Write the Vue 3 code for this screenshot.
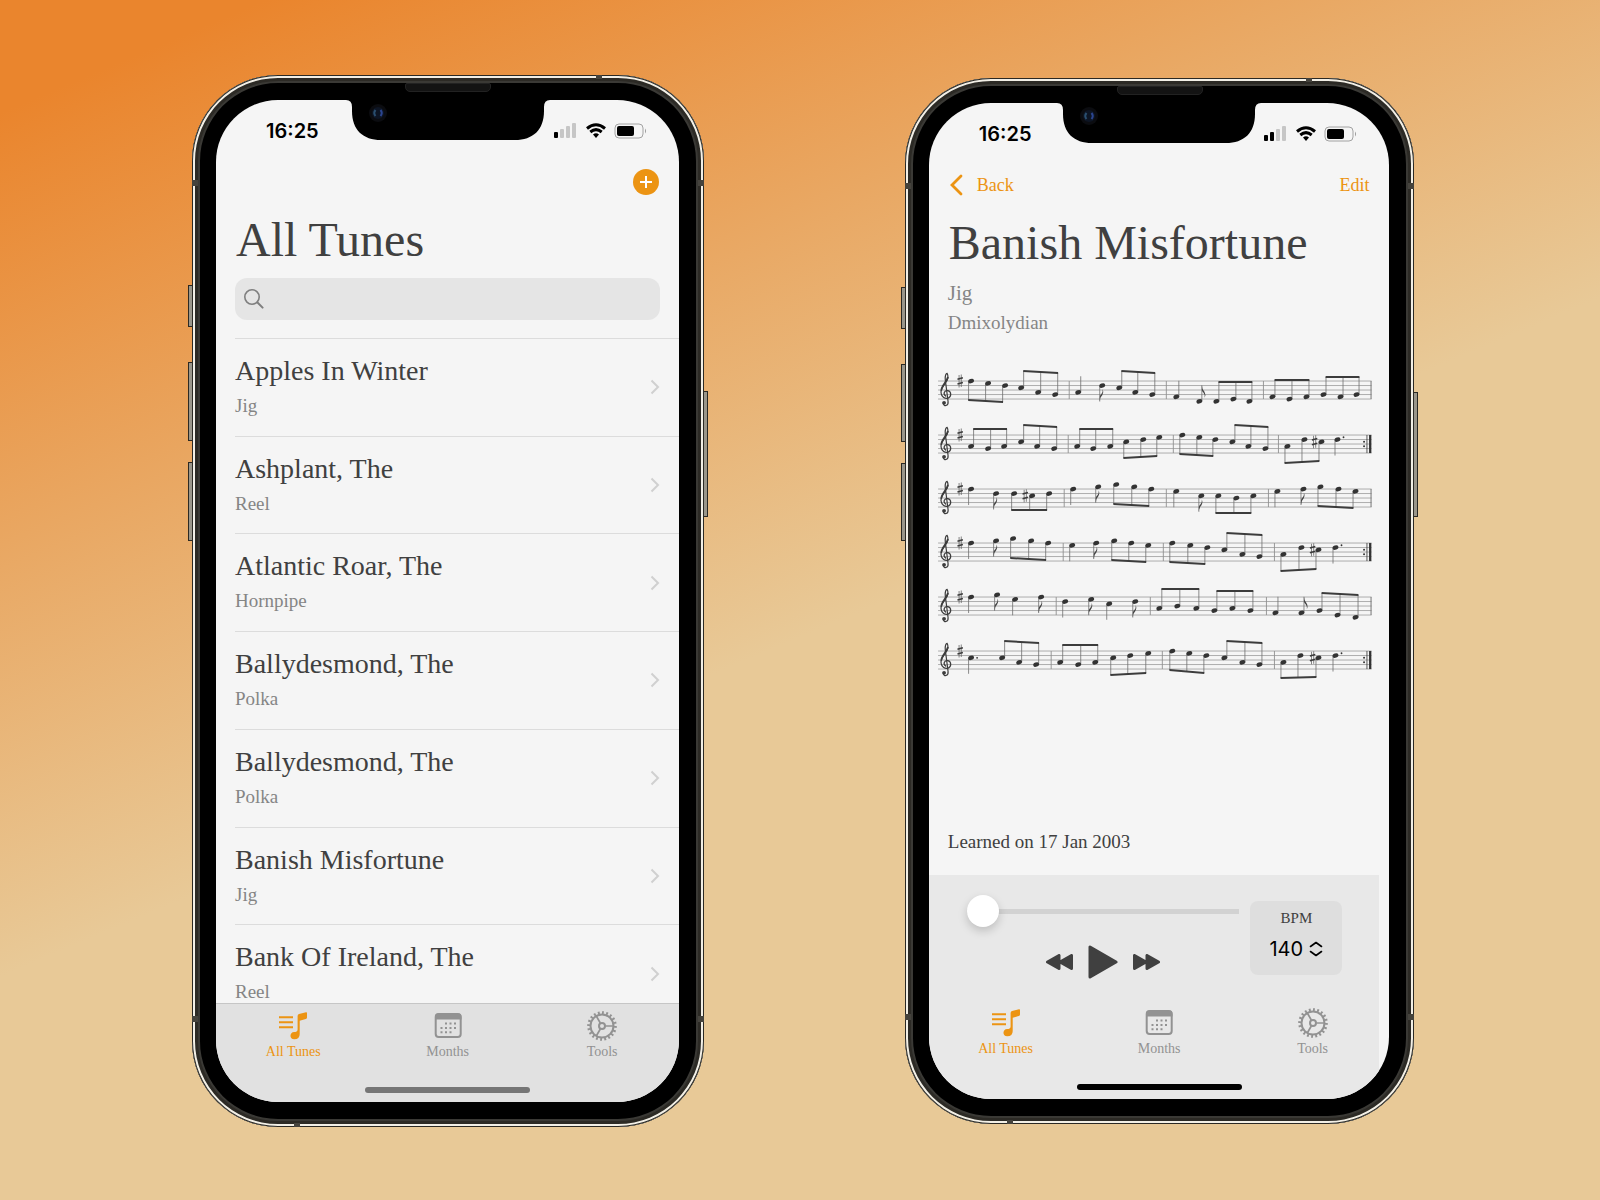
<script setup>
import { ref } from 'vue'

const tunes = [
  { name: 'Apples In Winter', type: 'Jig' },
  { name: 'Ashplant, The', type: 'Reel' },
  { name: 'Atlantic Roar, The', type: 'Hornpipe' },
  { name: 'Ballydesmond, The', type: 'Polka' },
  { name: 'Ballydesmond, The', type: 'Polka' },
  { name: 'Banish Misfortune', type: 'Jig' },
  { name: 'Bank Of Ireland, The', type: 'Reel' },
]

const tabs = ['All Tunes', 'Months', 'Tools']
const phones = [
  { id: 'list', bars: 1 },
  { id: 'tune', bars: 2 },
]

const position = ref(0)
const bpm = ref(140)
const query = ref('')

// Pitches count half staff spaces down from the top line.
// single: [x, pitch, direction, flagged, dotted]
// beam: [x positions, pitches, beam start y, beam end y, direction]
const staves = [
  {
    bars: [131, 228, 325], sharps: [],
    singles: [[140, 5, 1, 0], [164, 2, -1, 1], [238, 7, 1, 0], [261, 9, 1, 1]],
    beams: [
      [[33, 50, 67], [0, 1, 2], 19, 21, -1], [[83, 100, 117], [3, 5, 6], -10, -8, 1],
      [[181, 197, 214], [3, 5, 6], -10, -8, 1], [[278, 295, 311], [9, 8, 9], 1, 1, 1],
      [[334, 351, 368], [7, 8, 7], -1, -1, 1], [[385, 402, 418], [6, 7, 6], -4, -4, 1],
    ],
  },
  {
    bars: [130, 235, 340], sharps: [[376, 3]], repeat: true,
    singles: [[399, 2, -1, 0, 1]],
    beams: [
      [[33, 50, 66], [5, 6, 5], -6, -6, 1], [[83, 99, 116], [3, 5, 6], -10, -8, 1],
      [[139, 155, 172], [5, 6, 5], -6, -6, 1], [[188, 205, 221], [3, 2, 1], 23, 21, -1],
      [[244, 261, 277], [0, 1, 2], 19, 21, -1], [[294, 310, 327], [3, 5, 6], -10, -8, 1],
      [[349, 366, 383], [5, 2, 3], 28, 26, -1],
    ],
  },
  {
    bars: [126, 228, 330], sharps: [[87, 3]],
    singles: [[33, 0, -1, 0], [58, 2, -1, 1], [135, 0, -1, 0], [160, -1, -1, 1], [238, 1, -1, 0], [263, 3, -1, 1], [339, 1, -1, 0], [365, 0, -1, 1]],
    beams: [
      [[76, 94, 111], [2, 3, 2], 21, 21, -1], [[178, 196, 213], [-2, -1, 0], 15, 17, -1],
      [[280, 298, 315], [3, 4, 3], 24, 24, -1], [[382, 400, 417], [-1, 0, 1], 17, 19, -1],
    ],
  },
  {
    bars: [125, 225, 336], sharps: [[374, 3]], repeat: true,
    singles: [[33, 0, -1, 0], [58, -1, -1, 1], [134, 1, -1, 0], [158, 0, -1, 1], [397, 2, -1, 0, 1]],
    beams: [
      [[75, 93, 110], [-2, -1, 0], 15, 17, -1], [[176, 193, 210], [-1, 0, 1], 17, 19, -1],
      [[234, 252, 269], [0, 1, 2], 19, 21, -1], [[286, 304, 321], [3, 5, 6], -10, -8, 1],
      [[345, 363, 380], [5, 2, 3], 28, 26, -1],
    ],
  },
  {
    bars: [118, 212, 328], sharps: [],
    singles: [[33, 0, -1, 0], [59, -1, -1, 1], [77, 1, -1, 0], [103, 0, -1, 1], [127, 2, -1, 0], [153, 1, -1, 1], [171, 3, -1, 0], [197, 2, -1, 1], [337, 7, 1, 0], [363, 7, 1, 1]],
    beams: [
      [[221, 239, 258], [5, 4, 5], -8, -8, 1], [[276, 294, 312], [6, 5, 6], -6, -6, 1],
      [[381, 399, 417], [6, 8, 9], -4, -2, 1],
    ],
  },
  {
    bars: [113, 224, 336], sharps: [[374, 3]], repeat: true,
    singles: [[33, 3, -1, 0, 1], [397, 2, -1, 0, 1]],
    beams: [
      [[64, 81, 98], [3, 5, 6], -10, -8, 1], [[122, 140, 157], [5, 6, 5], -6, -6, 1],
      [[175, 192, 210], [3, 2, 1], 24, 22, -1], [[234, 251, 268], [0, 1, 2], 19, 22, -1],
      [[286, 304, 321], [3, 5, 6], -10, -8, 1], [[345, 362, 380], [5, 2, 3], 27, 26, -1],
    ],
  },
]

const STEP = 2.25
const noteY = (pitch) => pitch * STEP
const stemX = (x, dir) => x + dir * 2.5
const heads = (staff) => [
  ...staff.singles.map(([x, p]) => [x, p]),
  ...staff.beams.flatMap(([xs, ps]) => xs.map((x, i) => [x, ps[i]])),
]
const stems = (staff) => [
  ...staff.singles.map(([x, p, d]) => `M${stemX(x, d)} ${noteY(p)}v${-d * 16}`),
  ...staff.beams.flatMap(([xs, ps, a, b, d]) =>
    xs.map((x, i) => `M${stemX(x, d)} ${noteY(ps[i])}V${a + ((b - a) * i) / 2}`)),
].join('')
const beamPath = ([xs, , a, b, d]) => {
  const left = stemX(xs[0], d) - 0.4
  const right = stemX(xs[2], d) + 0.4
  return `M${left} ${a - 1}L${right} ${b - 1}V${b + 1}L${left} ${a + 1}Z`
}
const flags = (staff) => staff.singles.filter((n) => n[3]).map(([x, p, d]) =>
  `M${stemX(x, d)} ${noteY(p) - d * 16}q0 ${d * 4} 2.6 ${d * 6.5}q1.8 ${d * 3} 0.2 ${d * 6}q0.6 ${-d * 3} -1.2 ${-d * 5}q-1.6 ${-d * 1.6} -1.6 ${-d * 3}z`).join('')
</script>

<template>
  <main class="stage">
    <article v-for="phone in phones" :key="phone.id" class="phone" :class="phone.id">
      <span class="key mute"></span>
      <span class="key up"></span>
      <span class="key down"></span>
      <span class="key power"></span>
      <span class="band band-l1"></span>
      <span class="band band-l2"></span>
      <span class="band band-r1"></span>
      <span class="band band-r2"></span>
      <span class="band band-t"></span>
      <span class="band band-b"></span>
      <span class="speaker"></span>

      <section class="screen">
        <svg class="notch" viewBox="0 0 204 40" aria-hidden="true">
          <path d="M0 0H204Q198 0 198 7V11C198 30 187 40 169 40H35C17 40 6 30 6 11V7Q6 0 0 0Z" fill="#000" />
          <circle cx="32" cy="13" r="9" fill="#0b0c10" />
          <circle cx="32" cy="13" r="6" fill="#0d1524" />
          <path d="M29.500 10q-2.500 3 0 6" stroke="#2a4f70" stroke-width="2" fill="none" />
          <path d="M34.500 10q2.500 3 0 6" stroke="#2b4590" stroke-width="2" fill="none" />
        </svg>

        <header class="status">
          <time>16:25</time>
          <svg width="94" height="16" viewBox="0 0 94 16" aria-hidden="true">
            <rect v-for="n in 4" :key="n" :x="1 + (n - 1) * 6" :y="12 - n * 3" width="4" :height="3 + n * 3" rx="1" :fill="n <= phone.bars ? '#000' : '#c6c6c6'" />
            <g fill="none" stroke="#000" stroke-width="3">
              <path d="M34 5.500Q43 -2 52 5.500" />
              <path d="M37.300 9Q43 4.300 48.700 9" />
            </g>
            <path d="M40 11.500Q43 9 46 11.500L43 15Z" />
            <rect x="62" y="1" width="28" height="14" rx="4" fill="none" stroke="#a2a2a2" />
            <rect x="64" y="3" width="17" height="10" rx="2" />
            <path d="M92 5.500q2 2.500 0 5z" fill="#999" />
          </svg>
        </header>

        <template v-if="phone.id === 'list'">
          <div class="toolbar end">
            <button class="add" aria-label="Add tune">
              <svg width="26" height="26" viewBox="0 0 26 26"><circle cx="13" cy="13" r="13" fill="#ec9413" /><path d="M13 7v12M7 13h12" stroke="#fff" stroke-width="2" /></svg>
            </button>
          </div>
          <h1>All Tunes</h1>
          <label class="search">
            <svg width="20" height="20" viewBox="0 0 20 20" fill="none" stroke="#7f7f7f" stroke-linecap="round"><circle cx="8" cy="8" r="7.200" stroke-width="1.600" /><path d="M13.500 13.500L18.600 18.600" stroke-width="2" /></svg>
            <input v-model="query" type="search" aria-label="Search tunes" />
          </label>
          <ul class="tunes">
            <li v-for="(tune, i) in tunes" :key="i">
              <a href="#">
                <span><strong>{{ tune.name }}</strong><small>{{ tune.type }}</small></span>
                <svg width="10" height="16" viewBox="0 0 10 16"><path d="M1.500 1.500L8 8L1.500 14.500" fill="none" stroke="#d0d0d0" stroke-width="2" /></svg>
              </a>
            </li>
          </ul>
        </template>

        <template v-else>
          <div class="toolbar">
            <a href="#" class="back">
              <svg width="14" height="22" viewBox="0 0 14 22"><path d="M12 2L3 11L12 20" fill="none" stroke="#ec9413" stroke-width="2.800" stroke-linecap="round" /></svg>
              Back
            </a>
            <button class="edit">Edit</button>
          </div>
          <h1>Banish Misfortune</h1>
          <p class="kind">Jig</p>
          <p class="mode">Dmixolydian</p>

          <div class="sheet">
            <svg v-for="(staff, s) in staves" :key="s" viewBox="0 -16 433 54">
              <path d="M0 0H433M0 4.500H433M0 9H433M0 13.500H433M0 18H433" stroke="#8f8f8f" stroke-width="0.700" />
              <path :d="staff.bars.map((x) => `M${x} 0v18`).join('')" stroke="#8f8f8f" stroke-width="0.900" />
              <path v-if="!staff.repeat" d="M432.500 0v18" stroke="#777" />
              <g v-else fill="#333">
                <circle cx="425.500" cy="6.800" r="1" /><circle cx="425.500" cy="11.300" r="1" />
                <rect x="428" y="0" width="0.800" height="18" /><rect x="430.500" y="0" width="2.300" height="18" />
              </g>
              <g fill="none" stroke="#3c3c3c" stroke-linecap="round">
                <path d="M5.200 22.200C5.500 25.800 10.600 25.200 10 20.500L7.200 -1.500C6.800 -5.500 8 -7.600 9 -7.600C10.600 -5 10.200 -1.500 7 2.500C4 6 2.600 8.500 3 12C3.500 16.200 7 18 10 17.200C13.500 16 13.600 10.500 9.800 9.600C6.500 9 4.500 12.500 7.600 15" stroke-width="1.200" />
                <path d="M9.700 -3.500C9 0 4 4.500 3.300 9" stroke-width="1.800" />
              </g>
              <circle cx="6" cy="21.800" r="1.900" fill="#3c3c3c" />
              <g v-for="([x, p], i) in [[22, 0], ...staff.sharps]" :key="'s' + i" :transform="`translate(${x} ${noteY(p)})`">
                <path d="M-1 -6V6.500M1.200 -6.500V6" stroke="#555" stroke-width="0.700" />
                <path d="M-2.600 -1.700L2.800 -3.200M-2.600 3L2.800 1.500" stroke="#3c3c3c" stroke-width="1.500" />
              </g>
              <path :d="stems(staff)" stroke="#6f6f6f" stroke-width="0.800" />
              <path :d="flags(staff)" fill="#444" />
              <path :d="staff.beams.map(beamPath).join('')" fill="#3c3c3c" />
              <ellipse v-for="([x, p], i) in heads(staff)" :key="i" rx="3" ry="2.100" fill="#333" :transform="`translate(${x} ${noteY(p)}) rotate(-22)`" />
              <circle v-for="([x, p], i) in staff.singles.filter((n) => n[4])" :key="'d' + i" :cx="x + 6" :cy="noteY(p % 2 ? p : p - 1)" r="0.900" fill="#333" />
            </svg>
          </div>

          <p class="learned">Learned on 17 Jan 2003</p>
        </template>

        <footer>
          <div v-if="phone.id === 'tune'" class="player">
            <div class="controls">
              <input v-model="position" type="range" min="0" max="100" aria-label="Position" />
              <div class="transport">
                <button aria-label="Rewind"><svg width="27" height="16" viewBox="0 0 27 16"><path d="M13 1.500V14.500L1.500 8ZM25.500 1.500V14.500L14 8Z" /></svg></button>
                <button aria-label="Play"><svg width="30" height="34" viewBox="0 0 30 34"><path d="M2 2V32L28 17Z" /></svg></button>
                <button aria-label="Fast forward"><svg width="27" height="16" viewBox="0 0 27 16"><path d="M14 1.500V14.500L25.500 8ZM1.500 1.500V14.500L13 8Z" /></svg></button>
              </div>
            </div>
            <label class="tempo">
              <span>BPM</span>
              <span class="picker">
                <select v-model="bpm"><option :value="140">140</option></select>
                <svg width="14" height="16" viewBox="0 0 14 16"><path d="M1.500 5.500L7 1.500L12.500 5.500M1.500 10.500L7 14.500L12.500 10.500" fill="none" stroke="#000" stroke-width="1.600" stroke-linecap="round" stroke-linejoin="round" /></svg>
              </span>
            </label>
          </div>

          <nav>
            <a v-for="(tab, t) in tabs" :key="tab" href="#" :class="{ active: t === 0 }">
              <svg v-if="t === 0" width="30" height="30" viewBox="-1 -1 30 30">
                <path d="M0 5.300H14M0 10.300H14M0 15.300H14" stroke="currentColor" stroke-width="2" />
                <path d="M18.600 4Q18.600 2.400 20 2L27 0.200Q28 0 28 1V5.500Q28 6.800 26.800 7.100L20.700 8.700V22Q20.700 27.300 15.200 27.300C10.200 27.300 10.200 20.200 15.200 20C17 20 18.600 19.600 18.600 17.500Z" fill="currentColor" />
              </svg>
              <svg v-else-if="t === 1" width="30" height="30" viewBox="-1 -2 30 30">
                <rect x="1.700" y="1" width="25" height="23" rx="3" fill="none" stroke="currentColor" stroke-width="2" />
                <path d="M1 6V4Q1 0.500 4 0.500H24.500Q27.500 0.500 27.500 4V6.500H1Z" fill="currentColor" />
                <path d="M11 10.500h11M6.500 15h15.500M6.500 19.300h11" stroke="currentColor" stroke-width="2" stroke-dasharray="2 2.500" />
              </svg>
              <svg v-else width="30" height="30" viewBox="-15 -15 30 30" fill="none" stroke="currentColor">
                <circle r="13.300" stroke-width="3" pathLength="40" stroke-dasharray="0.900 1.100" />
                <circle r="11.500" stroke-width="2" />
                <circle r="3" stroke-width="2" />
                <path d="M3.500 0H11M-1.700 -3L-5.700 -10M-1.700 3L-5.700 10" stroke-width="1.700" />
              </svg>
              <span>{{ tab }}</span>
            </a>
          </nav>
          <div class="home"></div>
        </footer>
      </section>
    </article>
  </main>
</template>

<style>
body { margin: 0; }
</style>

<style scoped>
* { box-sizing: border-box; }

.stage {
  min-height: 100vh;
  padding: 75px 11.6% 0 12%;
  display: flex;
  align-items: flex-start;
  gap: 16.4%;
  font-family: "Liberation Serif", "Times New Roman", serif;
  color: #404040;
  background: linear-gradient(157deg, #ea852d 6%, #e8c997 52%);
}

.phone {
  position: relative;
  flex: 512 1 0;
  aspect-ratio: 512 / 1051;
  padding: 25px 25px 25px 24px;
  border-radius: 86px;
  background: #000;
  box-shadow: inset 0 0 0 1px #2b2923, inset 0 0 0 3px #f2efe6, inset 0 0 0 6px #2c2a25, inset 0 0 0 8px #3a3935;
}
.phone.tune { flex-grow: 509; aspect-ratio: 509 / 1045; margin-top: 3px; }

.key {
  position: absolute;
  left: -4px;
  width: 4px;
  border: 1px solid #2b2923;
  border-right: 0;
  background: #9a968a;
}
.mute { top: 20%; height: 4%; }
.up { top: 27.3%; height: 7.5%; }
.down { top: 36.8%; height: 7.5%; }
.power { left: auto; right: -4px; top: 30%; height: 12%; border: 1px solid #2b2923; border-left: 0; }

.band { position: absolute; background: #45433d; }
.band-l1, .band-l2 { left: 0; width: 6px; height: 6px; }
.band-r1, .band-r2 { right: 0; width: 6px; height: 6px; }
.band-l1, .band-r1 { top: 10%; }
.band-l2, .band-r2 { bottom: 10%; }
.band-t { top: 0; right: 20%; width: 6px; height: 4px; }
.band-b { bottom: 0; left: 20%; width: 6px; height: 4px; }

.speaker {
  position: absolute;
  top: 8px;
  left: 50%;
  width: 86px;
  height: 9px;
  margin-left: -43px;
  border: 1px solid #222;
  border-radius: 2px 2px 5px 5px;
  background: #131313;
}

.screen {
  position: relative;
  height: 100%;
  display: flex;
  flex-direction: column;
  overflow: hidden;
  border-radius: 62px;
  background: #f5f5f5;
}

.notch { position: absolute; top: 0; left: 50%; width: 204px; margin-left: -102px; }

.status {
  flex: none;
  display: flex;
  align-items: center;
  justify-content: space-between;
  height: 62px;
  padding: 0 32px 0 50px;
}
.status time { font: 600 20px "Inter", sans-serif; color: #000; }

.toolbar {
  flex: none;
  display: flex;
  align-items: center;
  justify-content: space-between;
  height: 40px;
  padding: 0 20px;
}
.toolbar.end { justify-content: flex-end; }

button { padding: 0; border: 0; background: none; font: inherit; color: inherit; }
svg { display: block; }
a { color: inherit; text-decoration: none; }
p { margin: 0; }

.add { line-height: 0; }
.back, .edit { font-size: 18px; color: #ec9413; }
.back { display: flex; align-items: center; gap: 14px; }

h1 { margin: 8px 20px 0; font-size: 48px; font-weight: 400; line-height: 60px; white-space: nowrap; }

.search {
  flex: none;
  display: flex;
  align-items: center;
  gap: 8px;
  height: 42px;
  margin: 8px 19px 18px;
  padding: 0 9px;
  border-radius: 12px;
  background: #e5e5e5;
}
.search input { flex: 1; min-width: 0; border: 0; outline: 0; background: none; font: 20px "Liberation Serif", serif; }

.tunes {
  flex: 1;
  min-height: 0;
  display: grid;
  grid-auto-rows: 14.7%;
  margin: 0;
  padding: 0 0 0 19px;
  overflow: hidden;
  list-style: none;
}
.tunes li { border-top: 1px solid #dcdcdc; }
.tunes a { display: flex; align-items: center; justify-content: space-between; height: 100%; padding-right: 19px; }
.tunes span { align-self: flex-start; padding-top: 14px; }
.tunes strong { display: block; font-size: 28px; font-weight: 400; line-height: 36px; }
.tunes small { display: block; font-size: 19px; line-height: 34px; color: #858585; }

.kind { margin: 6px 19px 0; font-size: 21px; line-height: 28px; color: #858585; }
.mode { margin: 0 19px; font-size: 19px; line-height: 32px; color: #858585; }
.sheet { margin: 26px 18px 0 9px; }
.sheet svg { width: 100%; overflow: visible; }
.learned { margin: auto 19px 19px; font-size: 19px; line-height: 28px; }

footer { flex: none; position: relative; padding-bottom: 9px; }
.list footer { border-top: 1px solid #c6c6c6; background: #e1e1e1; }
.tune footer { background: linear-gradient(#e8e8e8, #e8e8e8) no-repeat 0 0 / calc(100% - 10px) 100%; }

nav { display: grid; grid-template-columns: repeat(3, 1fr); padding-top: 7px; }
nav a { display: flex; flex-direction: column; align-items: center; font-size: 14px; line-height: 22px; color: #929292; }
nav a.active { color: #ec9413; }

.home { width: 165px; height: 6px; margin: 24px auto 0; border-radius: 3px; background: #757575; }
.tune .home { background: #000; }

.player { display: flex; justify-content: space-between; align-items: flex-start; padding: 20px 47px 0 38px; }
.controls { flex: 1; margin-right: 11px; }
.controls input {
  appearance: none;
  display: block;
  width: 100%;
  height: 32px;
  margin: 0;
  background: linear-gradient(#d2d2d2, #d2d2d2) no-repeat center / 100% 5px;
  border-radius: 3px;
}
.controls input::-webkit-slider-thumb {
  appearance: none;
  width: 32px;
  height: 32px;
  border-radius: 50%;
  background: #fff;
  box-shadow: 0 4px 10px rgba(0, 0, 0, 0.18);
}
.transport { display: flex; justify-content: center; align-items: center; gap: 15px; margin: 18px 0 22px; }
.transport svg { fill: #404040; stroke: #404040; stroke-width: 3px; stroke-linejoin: round; }

.tempo {
  display: flex;
  flex-direction: column;
  align-items: center;
  width: 92px;
  height: 74px;
  margin-top: 6px;
  border-radius: 8px;
  background: #dedede;
  font-size: 15px;
  line-height: 34px;
}
.picker { display: flex; align-items: center; gap: 6px; height: 28px; }
.picker select { appearance: none; padding: 0; border: 0; background: none; font: 20px "Inter", sans-serif; color: #000; }
</style>
